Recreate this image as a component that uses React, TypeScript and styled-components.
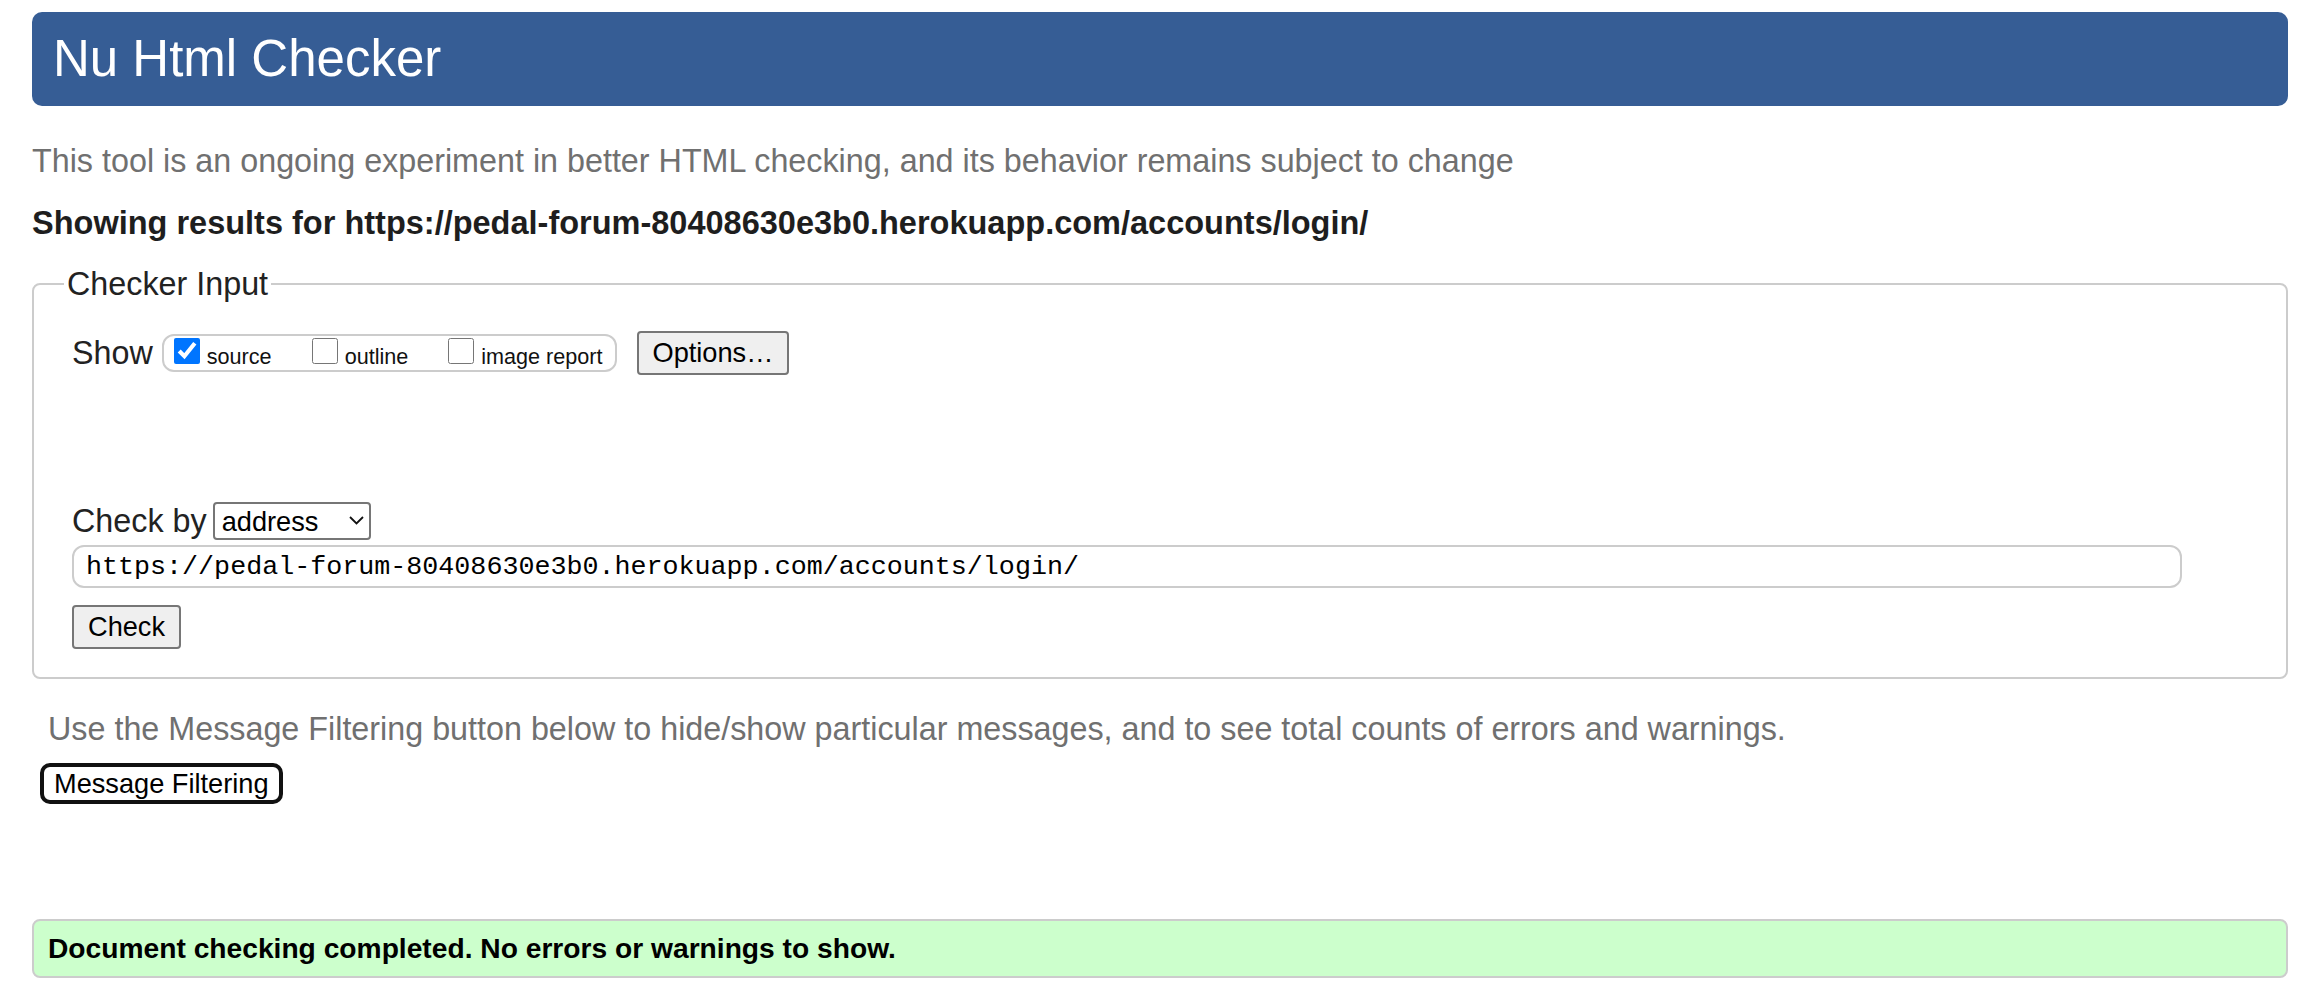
import React from "react";
import styled, { createGlobalStyle } from "styled-components";

const GlobalStyle = createGlobalStyle`
  html, body { margin: 0; padding: 0; background: #ffffff; }
  body { font-family: "Liberation Sans", Arial, sans-serif; color: #222222; }
`;

const Page = styled.div`
  display: flex;
  flex-direction: column;
  padding: 12px 28px 17px 32px;
`;

const Header = styled.h1`
  margin: 0;
  height: 94px;
  box-sizing: border-box;
  padding-left: 21px;
  background: #365d95;
  color: #ffffff;
  border-radius: 10px;
  font-size: 51px;
  font-weight: normal;
  line-height: 94px;
`;

const Intro = styled.p<{ $indent?: number; $top: number }>`
  margin: ${(p) => p.$top}px 0 0;
  padding-left: ${(p) => p.$indent ?? 0}px;
  font-size: 32.3px;
  line-height: 40px;
  color: #707070;
`;

const ResultsFor = styled.p`
  margin: 22px 0 0;
  font-size: 32.5px;
  line-height: 40px;
  font-weight: bold;
  color: #1e1e1e;
`;

const Fieldset = styled.fieldset`
  margin: 23px 0 0;
  border: 2px solid #cccccc;
  border-radius: 8px;
  padding: 29px 0 28px 38px;
  min-width: 0;
`;

const Legend = styled.legend`
  font-size: 32.3px;
  line-height: 36px;
  padding: 0 3px;
  margin-left: -8px;
  color: #222222;
`;

const Row = styled.div<{ $top?: number }>`
  display: flex;
  align-items: center;
  margin-top: ${(p) => p.$top ?? 0}px;
`;

const RowLabel = styled.span`
  font-size: 32.3px;
  line-height: 40px;
  color: #222222;
`;

const ShowGroup = styled.div`
  display: inline-flex;
  align-items: baseline;
  box-sizing: border-box;
  height: 38px;
  margin-left: 9px;
  padding: 2px 12px 0 10px;
  gap: 40px;
  border: 2px solid #cccccc;
  border-radius: 12px;
`;

const CheckLabel = styled.label`
  display: inline-block;
  font-size: 21.6px;
  color: #111111;
  white-space: nowrap;
`;

const Checkbox = styled.input`
  width: 26px;
  height: 26px;
  margin: 0 7px 0 0;
  vertical-align: baseline;
`;

const Button = styled.button<{ $left?: number }>`
  box-sizing: border-box;
  height: 44px;
  margin-left: ${(p) => p.$left ?? 0}px;
  padding: 0 14px;
  font-family: "Liberation Sans", Arial, sans-serif;
  font-size: 27.2px;
  color: #000000;
  background: #efefef;
  border: 2px solid #767676;
  border-radius: 4px;
`;

const SelectWrap = styled.span`
  position: relative;
  display: inline-flex;
  margin-left: 6px;
`;

const Select = styled.select`
  appearance: none;
  box-sizing: border-box;
  width: 158px;
  height: 38px;
  padding: 0 0 0 7px;
  font-family: "Liberation Sans", Arial, sans-serif;
  font-size: 27.2px;
  color: #000000;
  background: #ffffff;
  border: 2px solid #767676;
  border-radius: 4px;
`;

const Chevron = styled.svg`
  position: absolute;
  right: 7px;
  top: 14px;
  width: 15px;
  height: 9px;
  pointer-events: none;
`;

const UrlInput = styled.input`
  display: block;
  box-sizing: border-box;
  width: 2110px;
  height: 43px;
  margin-top: 4px;
  padding: 0 0 0 12px;
  font-family: "Liberation Mono", "Courier New", monospace;
  font-size: 26.7px;
  color: #000000;
  background: #ffffff;
  border: 2px solid #cccccc;
  border-radius: 12px;
  outline: none;
`;

const CheckRow = styled.div`
  margin-top: 17px;
  display: flex;
`;

const FilterButton = styled.button`
  align-self: flex-start;
  box-sizing: border-box;
  height: 41px;
  margin: 14px 0 0 8px;
  padding: 0 10px;
  font-family: "Liberation Sans", Arial, sans-serif;
  font-size: 27.2px;
  color: #000000;
  background: #ffffff;
  border: 4px solid #111111;
  border-radius: 10px;
`;

const Success = styled.div`
  display: flex;
  align-items: center;
  box-sizing: border-box;
  height: 59px;
  margin-top: 115px;
  padding-left: 14px;
  background: #ccffcc;
  border: 2px solid #cccccc;
  border-radius: 8px;
  font-size: 28.2px;
  font-weight: bold;
  color: #000000;
`;

const url = "https://pedal-forum-80408630e3b0.herokuapp.com/accounts/login/";

export default function App() {
  return (
    <>
      <GlobalStyle />
      <Page>
        <Header>Nu Html Checker</Header>
        <Intro $top={35}>
          This tool is an ongoing experiment in better HTML checking, and its behavior remains subject to change
        </Intro>
        <ResultsFor>Showing results for {url}</ResultsFor>
        <Fieldset>
          <Legend>Checker Input</Legend>
          <Row>
            <RowLabel>Show</RowLabel>
            <ShowGroup>
              <CheckLabel>
                <Checkbox type="checkbox" defaultChecked />
                source
              </CheckLabel>
              <CheckLabel>
                <Checkbox type="checkbox" />
                outline
              </CheckLabel>
              <CheckLabel>
                <Checkbox type="checkbox" />
                image report
              </CheckLabel>
            </ShowGroup>
            <Button type="button" $left={20}>Options…</Button>
          </Row>
          <Row $top={126}>
            <RowLabel>Check by</RowLabel>
            <SelectWrap>
              <Select defaultValue="address">
                <option value="address">address</option>
                <option value="file">file upload</option>
                <option value="text">text input</option>
              </Select>
              <Chevron viewBox="0 0 15 9">
                <path d="M1 1 L7.5 7.5 L14 1" fill="none" stroke="#111111" strokeWidth="1.8" />
              </Chevron>
            </SelectWrap>
          </Row>
          <UrlInput type="text" defaultValue={url} />
          <CheckRow>
            <Button type="button">Check</Button>
          </CheckRow>
        </Fieldset>
        <Intro $top={30} $indent={16}>
          Use the Message Filtering button below to hide/show particular messages, and to see total counts of errors and warnings.
        </Intro>
        <FilterButton type="button">Message Filtering</FilterButton>
        <Success>Document checking completed. No errors or warnings to show.</Success>
      </Page>
    </>
  );
}
